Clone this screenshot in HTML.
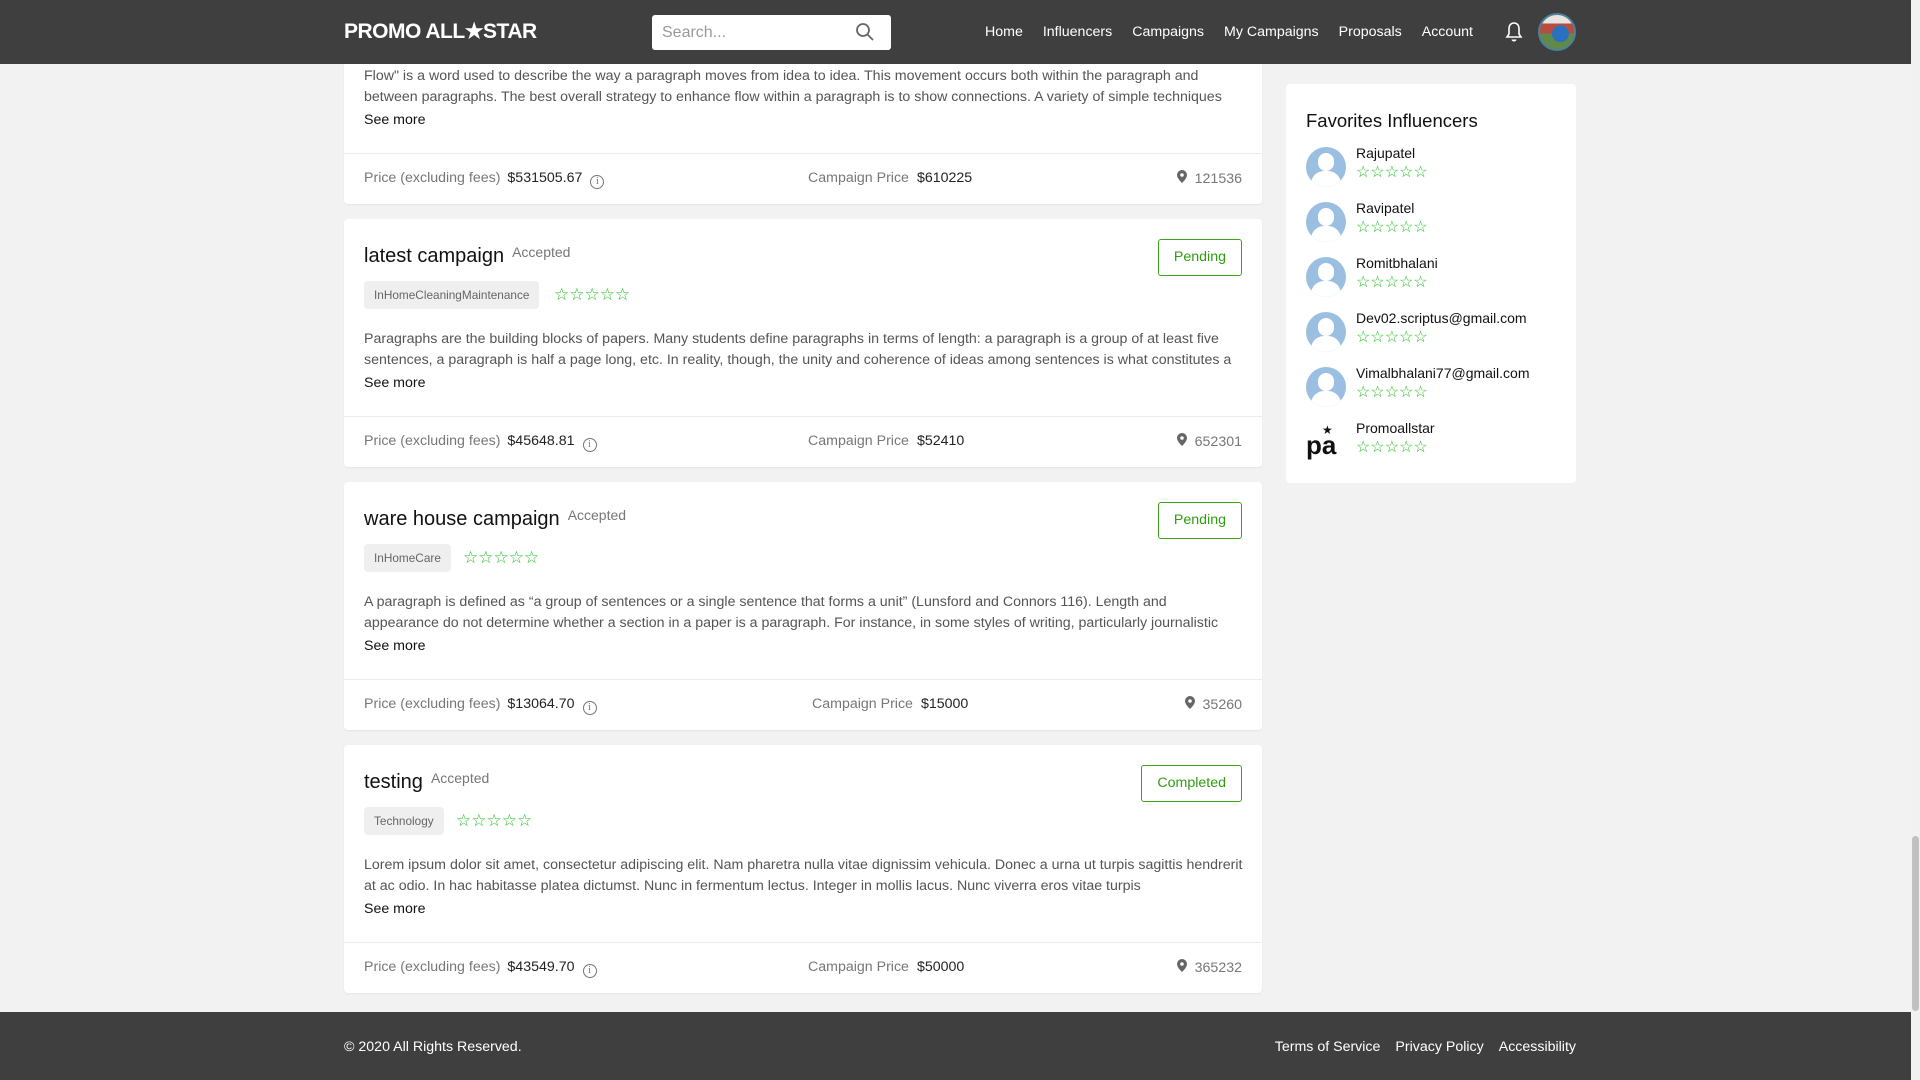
<!DOCTYPE html>
<html><head><meta charset="utf-8">
<style>
*{box-sizing:border-box;margin:0;padding:0}
html,body{width:1920px;height:1080px;overflow:hidden}
body{background:#f2f2f2;font-family:"Liberation Sans",Arial,sans-serif;color:#222;position:relative}
.hdr{position:absolute;left:0;top:0;width:1911px;height:64px;background:#3f3f3f;z-index:5}
.logo{position:absolute;left:344px;top:19px;color:#fff;font-weight:bold;font-size:21px;letter-spacing:-0.5px}
.search{position:absolute;left:652px;top:15px;width:239px;height:35px;background:#fff;border-radius:3px}
.search span{position:absolute;left:10px;top:9px;font-size:16px;color:#999}
.search svg{position:absolute;right:16px;top:7px}
.nav{position:absolute;right:438px;top:24px;font-size:14.2px;color:#fff;display:flex;gap:20px}
.bell{position:absolute;left:1505px;top:21px}
.av{position:absolute;left:1538px;top:13px;width:38px;height:38px;border-radius:50%;border:2px solid #4f7f9a;background:radial-gradient(circle at 60% 55%,#2b6fbf 0 30%,transparent 31%),linear-gradient(#e9e3e0 0 25%,#b84d3f 25% 55%,#5f8a4a 55%);}
.card{position:absolute;left:344px;width:918px;height:248px;background:#fff;border-radius:4px;box-shadow:0 1px 2px rgba(0,0,0,.06)}
.title{position:absolute;left:20px;top:25px;font-size:20px;color:#111}
.title span{font-size:14px;color:#777;margin-left:8px;vertical-align:5px}
.tag{position:absolute;left:20px;top:62px;height:28px;line-height:28px;padding:0 10px;background:#efefef;border-radius:4px;font-size:11.8px;color:#666}
.stars{color:#2bc22b;font-size:17px;letter-spacing:0px;line-height:1}
.tagrow .stars{position:absolute;top:67px}
.para{position:absolute;left:20px;top:110px;width:880px;font-size:14.2px;line-height:21px;color:#555;height:42px;overflow:hidden}
.more{position:absolute;left:20px;top:156px;font-size:14.2px;color:#111}
.div{position:absolute;left:0;right:0;top:197px;border-top:1px solid #ececec}
.prow{position:absolute;left:20px;top:214px;font-size:14.2px;color:#777}
.prow b{font-weight:normal;color:#222;margin-left:7px}
.cp{position:absolute;top:214px;font-size:14.2px;color:#777}
.cp b{font-weight:normal;color:#222;margin-left:8px}
.loc{position:absolute;right:20px;top:214px;font-size:14.2px;color:#777}
.badge{position:absolute;right:20px;top:20px;height:37px;line-height:35px;padding:0 15px;border:1px solid #39a31a;border-radius:3px;color:#2f9d10;font-size:14.2px}
.info{display:inline-block;width:14px;height:14px;border:1.3px solid #777;border-radius:50%;font-size:10px;line-height:11px;text-align:center;color:#777;margin-left:8px;vertical-align:-2px;font-family:"Liberation Serif",serif}
.side{position:absolute;left:1286px;top:84px;width:290px;height:399px;background:#fff;border-radius:4px}
.side h3{position:absolute;left:20px;top:26px;font-weight:normal;font-size:18.5px;color:#111}
.it{position:absolute;left:20px;width:260px;height:42px}
.it .a{position:absolute;left:0;top:0;width:40px;height:40px;border-radius:50%;background:#9bbfe0;overflow:hidden}
.it .a:before{content:"";position:absolute;left:12px;top:6px;width:16px;height:18px;border-radius:8px;background:#fff}
.it .a:after{content:"";position:absolute;left:5px;top:24px;width:30px;height:22px;border-radius:13px 13px 0 0;background:#fff}
.it .n{position:absolute;left:50px;top:-2px;font-size:14px;color:#111}
.it .stars{position:absolute;left:50px;top:18px;font-size:16px}
.ft{position:absolute;left:0;top:1012px;width:1911px;height:68px;background:#3f3f3f;color:#fff;font-size:14.2px}
.ft .l{position:absolute;left:344px;top:27px}
.ft .r{position:absolute;right:335px;top:27px;display:flex;gap:15px}
.sb{position:absolute;right:0;top:0;width:9px;height:1080px;background:#f1f1f1}
.sb div{position:absolute;left:1px;top:836px;width:7px;height:175px;background:#c1c1c1;border-radius:4px}
</style></head><body>
<div class="hdr">
<div class="logo">PROMO ALL★STAR</div>
<div class="search"><span>Search...</span><svg width="20" height="20" viewBox="0 0 20 20"><circle cx="8" cy="8" r="6" fill="none" stroke="#666" stroke-width="1.8"/><path d="M12.5 12.5l5.5 5.5" stroke="#666" stroke-width="1.8"/></svg></div>
<div class="nav"><span>Home</span><span>Influencers</span><span>Campaigns</span><span>My Campaigns</span><span>Proposals</span><span>Account</span></div>
<svg class="bell" width="18" height="22" viewBox="0 0 18 22"><path d="M9 2c-3.3 0-5 2.6-5 5.5v5.5L2 16h14l-2-3V7.5C14 4.6 12.3 2 9 2z" fill="none" stroke="#fff" stroke-width="1.6"/><path d="M6.5 18.5a2.5 2 0 005 0" fill="#fff"/></svg>
<div class="av"></div>
</div>

<div class="card" style="top:-44px">
<div class="para">Flow" is a word used to describe the way a paragraph moves from idea to idea. This movement occurs both within the paragraph and between paragraphs. The best overall strategy to enhance flow within a paragraph is to show connections. A variety of simple techniques</div>
<div class="more">See more</div><div class="div"></div>
<div class="prow">Price (excluding fees)<b>$531505.67</b><span class="info">i</span></div>
<div class="cp" style="left:464px">Campaign Price<b>$610225</b></div>
<div class="loc"><svg width="10" height="13" viewBox="0 0 10 13"><path d="M5 0a5 5 0 00-5 5c0 3.5 5 8 5 8s5-4.5 5-8a5 5 0 00-5-5z" fill="#666"/><circle cx="5" cy="5" r="1.8" fill="#fff"/></svg>&nbsp; 121536</div>
</div>

<div class="card" style="top:219px">
<div class="title">latest campaign<span>Accepted</span></div>
<div class="badge">Pending</div>
<div class="tagrow"><div class="tag">InHomeCleaningMaintenance</div><span class="stars" style="left:210px">☆☆☆☆☆</span></div>
<div class="para">Paragraphs are the building blocks of papers. Many students define paragraphs in terms of length: a paragraph is a group of at least five sentences, a paragraph is half a page long, etc. In reality, though, the unity and coherence of ideas among sentences is what constitutes a</div>
<div class="more">See more</div><div class="div"></div>
<div class="prow">Price (excluding fees)<b>$45648.81</b><span class="info">i</span></div>
<div class="cp" style="left:464px">Campaign Price<b>$52410</b></div>
<div class="loc"><svg width="10" height="13" viewBox="0 0 10 13"><path d="M5 0a5 5 0 00-5 5c0 3.5 5 8 5 8s5-4.5 5-8a5 5 0 00-5-5z" fill="#666"/><circle cx="5" cy="5" r="1.8" fill="#fff"/></svg>&nbsp; 652301</div>
</div>

<div class="card" style="top:482px">
<div class="title">ware house campaign<span>Accepted</span></div>
<div class="badge">Pending</div>
<div class="tagrow"><div class="tag">InHomeCare</div><span class="stars" style="left:119px">☆☆☆☆☆</span></div>
<div class="para">A paragraph is defined as “a group of sentences or a single sentence that forms a unit” (Lunsford and Connors 116). Length and appearance do not determine whether a section in a paper is a paragraph. For instance, in some styles of writing, particularly journalistic</div>
<div class="more">See more</div><div class="div"></div>
<div class="prow">Price (excluding fees)<b>$13064.70</b><span class="info">i</span></div>
<div class="cp" style="left:468px">Campaign Price<b>$15000</b></div>
<div class="loc"><svg width="10" height="13" viewBox="0 0 10 13"><path d="M5 0a5 5 0 00-5 5c0 3.5 5 8 5 8s5-4.5 5-8a5 5 0 00-5-5z" fill="#666"/><circle cx="5" cy="5" r="1.8" fill="#fff"/></svg>&nbsp; 35260</div>
</div>

<div class="card" style="top:745px">
<div class="title">testing<span>Accepted</span></div>
<div class="badge">Completed</div>
<div class="tagrow"><div class="tag">Technology</div><span class="stars" style="left:112px">☆☆☆☆☆</span></div>
<div class="para">Lorem ipsum dolor sit amet, consectetur adipiscing elit. Nam pharetra nulla vitae dignissim vehicula. Donec a urna ut turpis sagittis hendrerit at ac odio. In hac habitasse platea dictumst. Nunc in fermentum lectus. Integer in mollis lacus. Nunc viverra eros vitae turpis</div>
<div class="more">See more</div><div class="div"></div>
<div class="prow">Price (excluding fees)<b>$43549.70</b><span class="info">i</span></div>
<div class="cp" style="left:464px">Campaign Price<b>$50000</b></div>
<div class="loc"><svg width="10" height="13" viewBox="0 0 10 13"><path d="M5 0a5 5 0 00-5 5c0 3.5 5 8 5 8s5-4.5 5-8a5 5 0 00-5-5z" fill="#666"/><circle cx="5" cy="5" r="1.8" fill="#fff"/></svg>&nbsp; 365232</div>
</div>

<div class="side">
<h3>Favorites Influencers</h3>
<div class="it" style="top:63px"><div class="a"></div><div class="n">Rajupatel</div><div class="stars">☆☆☆☆☆</div></div>
<div class="it" style="top:118px"><div class="a"></div><div class="n">Ravipatel</div><div class="stars">☆☆☆☆☆</div></div>
<div class="it" style="top:173px"><div class="a"></div><div class="n">Romitbhalani</div><div class="stars">☆☆☆☆☆</div></div>
<div class="it" style="top:228px"><div class="a"></div><div class="n">Dev02.scriptus@gmail.com</div><div class="stars">☆☆☆☆☆</div></div>
<div class="it" style="top:283px"><div class="a"></div><div class="n">Vimalbhalani77@gmail.com</div><div class="stars">☆☆☆☆☆</div></div>
<div class="it" style="top:338px"><svg style="position:absolute;left:0;top:-2px" width="40" height="42" viewBox="0 0 40 42"><text x="16" y="14" font-size="12" fill="#111" font-family="Liberation Sans">★</text><text x="0" y="34" font-size="26" font-weight="bold" fill="#111" font-family="Liberation Sans">pa</text></svg><div class="n">Promoallstar</div><div class="stars">☆☆☆☆☆</div></div>
</div>

<div class="ft"><div class="l">© 2020 All Rights Reserved.</div><div class="r"><span>Terms of Service</span><span>Privacy Policy</span><span>Accessibility</span></div></div>
<div class="sb"><div></div></div>
</body></html>
